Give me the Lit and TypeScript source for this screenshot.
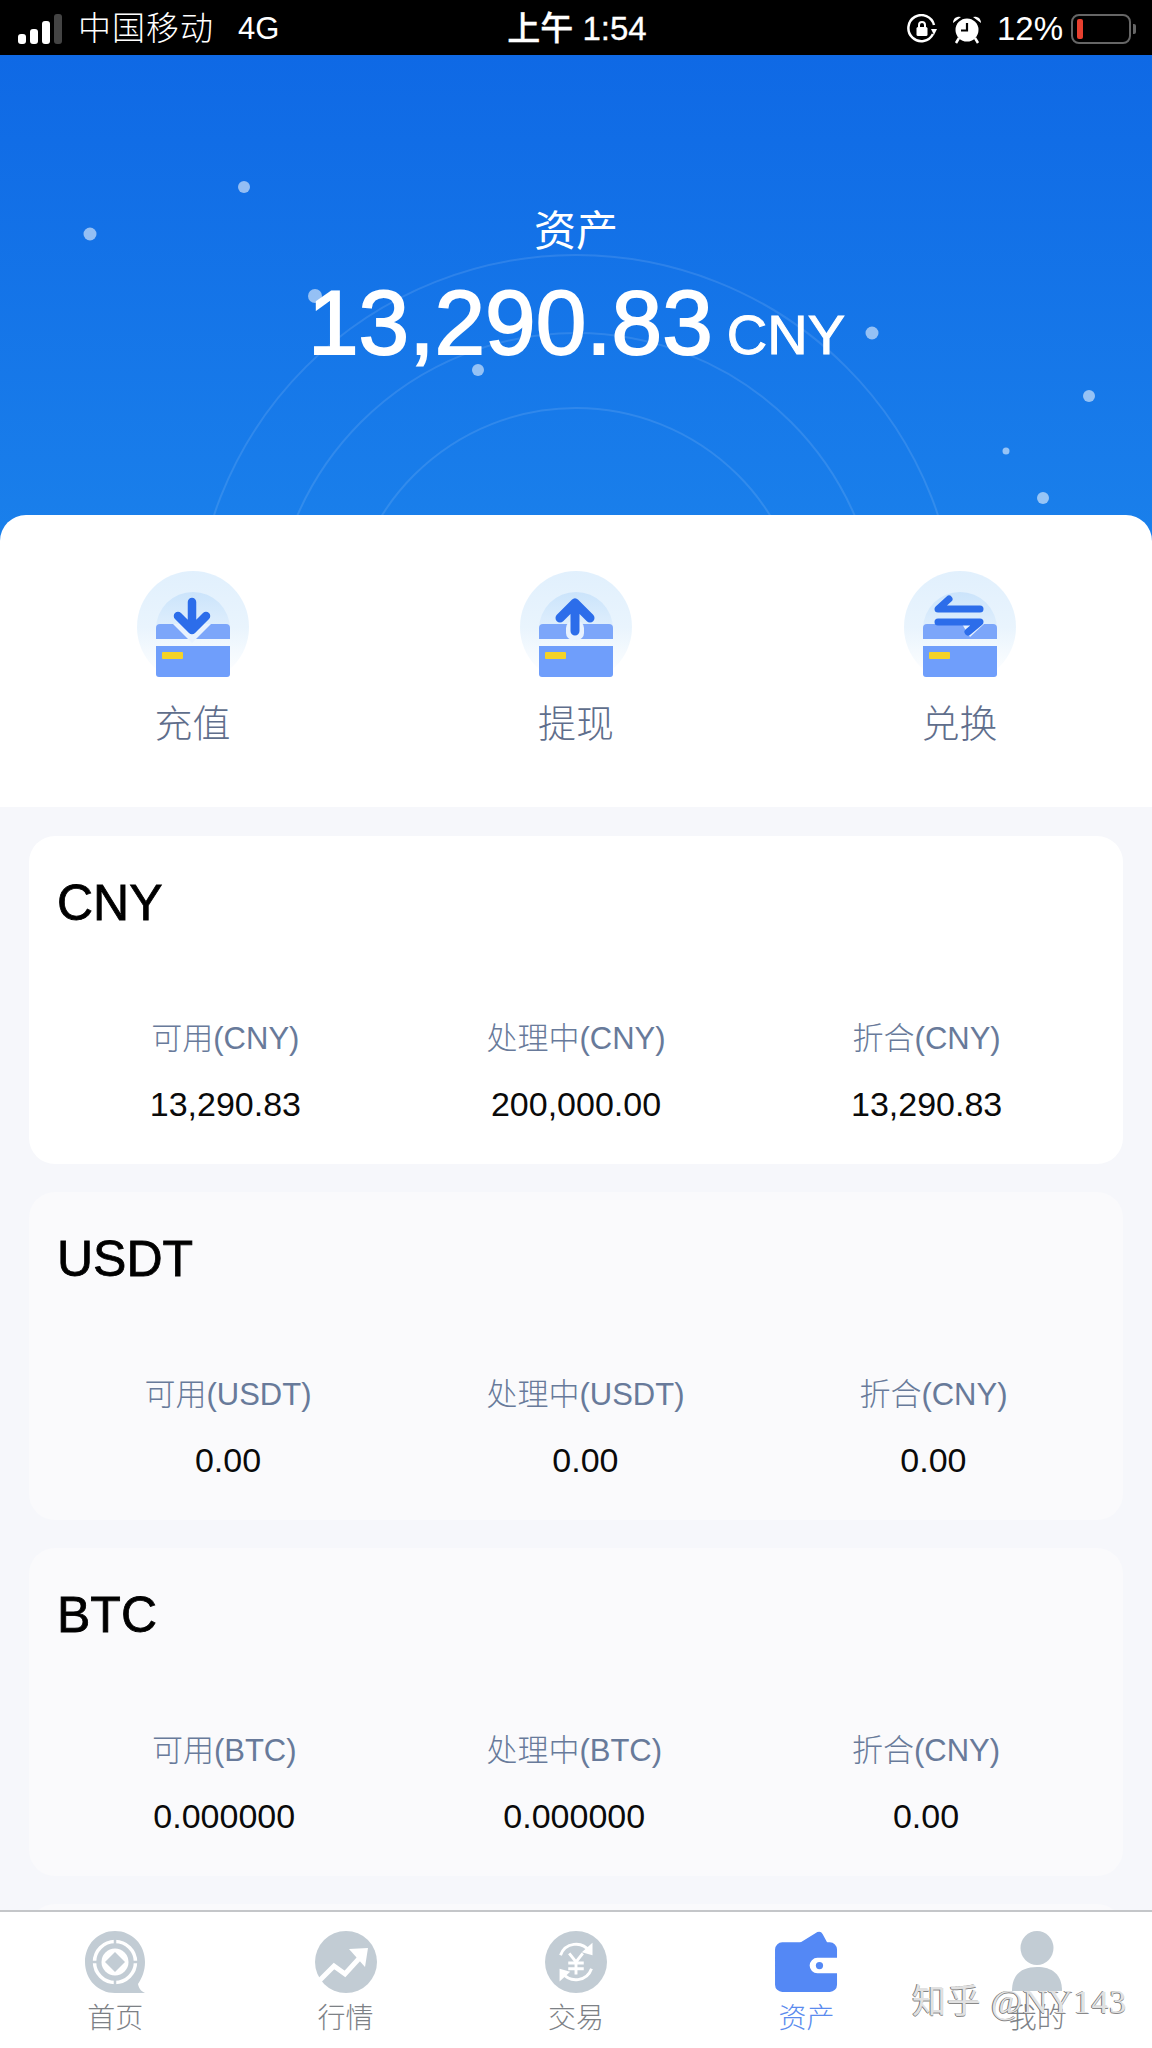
import { LitElement, html, css, svg } from "lit";
import { customElement } from "lit/decorators.js";

const assets = [
  { name: "CNY", rows: [["可用(CNY)", "13,290.83"], ["处理中(CNY)", "200,000.00"], ["折合(CNY)", "13,290.83"]], dim: false },
  { name: "USDT", rows: [["可用(USDT)", "0.00"], ["处理中(USDT)", "0.00"], ["折合(CNY)", "0.00"]], dim: true },
  { name: "BTC", rows: [["可用(BTC)", "0.000000"], ["处理中(BTC)", "0.000000"], ["折合(CNY)", "0.00"]], dim: true },
];

const dots = [[90,179,6.5],[244,132,6],[315,241,7],[478,315,6],[872,278,6.5],[1089,341,6],[1006,396,3.5],[1043,443,6]];

const actionBase = (id: string, glyph: unknown, notch: unknown) => svg`
  <defs>
    <linearGradient id="o${id}" x1="0" y1="0" x2="0" y2="1">
      <stop offset="0" stop-color="#e1f0fd"/><stop offset="0.5" stop-color="#e9f4fd"/><stop offset="0.95" stop-color="#ffffff"/>
    </linearGradient>
    <linearGradient id="i${id}" x1="0" y1="0" x2="0" y2="1">
      <stop offset="0" stop-color="#cbe4fb"/><stop offset="1" stop-color="#e4f1fd"/>
    </linearGradient>
  </defs>
  <circle cx="56" cy="56" r="56" fill="url(#o${id})"/>
  <path d="M19 58a37 37 0 0 1 74 0v6H19z" fill="url(#i${id})"/>
  <path d="M19 57a4 4 0 0 1 4-4h66a4 4 0 0 1 4 4v11H19z" fill="#7ca6fa"/>
  <path d="M19 75h74v28a3 3 0 0 1-3 3H22a3 3 0 0 1-3-3z" fill="#6f9efb"/>
  <rect x="25" y="81" width="21" height="7" rx="1" fill="#f4d327"/>
  ${notch}
  ${glyph}
`;

const downIcon = svg`<svg class="aicon" viewBox="0 0 112 112">${actionBase("d",
  svg`<path d="M55 31V58M41 45l14 14 14-14" fill="none" stroke="#2c6dea" stroke-width="8.500" stroke-linecap="round" stroke-linejoin="round"/>`,
  svg`<path d="M36 53l19 19 19-19z" fill="#e8f2fe"/>`)}</svg>`;
const upIcon = svg`<svg class="aicon" viewBox="0 0 112 112">${actionBase("u",
  svg`<path d="M55 60V32M40 47l15-15 15 15" fill="none" stroke="#2c6dea" stroke-width="9" stroke-linecap="round" stroke-linejoin="round"/>`,
  svg`<rect x="46" y="50" width="18" height="19" rx="7" fill="#e8f2fe"/>`)}</svg>`;
const swapIcon = svg`<svg class="aicon" viewBox="0 0 112 112">${actionBase("s",
  svg`<path d="M76 38H34l11-10" fill="none" stroke="#2c6dea" stroke-width="7" stroke-linecap="round" stroke-linejoin="round"/><path d="M34 51H76L64 61" fill="none" stroke="#2c6dea" stroke-width="7" stroke-linecap="round" stroke-linejoin="round"/>`,
  svg`<path d="M58 53l8 13 14-13z" fill="#e8f2fe"/>`)}</svg>`;

const GR = "#c2ccd4";
const homeIcon = svg`<svg class="tabicon" viewBox="0 0 60 62">
  <path d="M30 0C13 0 0 13.500 0 31s13 31 30 31h30c-2-1-6-3-7-9 4-6 7-13 7-22C60 13.500 47 0 30 0z" fill="${GR}"/>
  <circle cx="30" cy="31" r="20.500" fill="none" stroke="#fff" stroke-width="3.500"/>
  <path d="M30 8v6M30 48v6M7 31h6M47 31h6" stroke="${GR}" stroke-width="2.500"/>
  <circle cx="30" cy="31" r="13.500" fill="#fff"/>
  <path d="M30 21l10 10-10 10-10-10z" fill="${GR}"/>
</svg>`;
const marketIcon = svg`<svg class="tabicon" viewBox="0 0 62 62">
  <ellipse cx="31" cy="31" rx="31" ry="31" fill="${GR}"/>
  <path d="M4 50l15-15 11 8 20-22" fill="none" stroke="#fff" stroke-width="5"/>
  <path d="M34 18l19-1-3 19z" fill="#fff"/>
</svg>`;
const tradeIcon = svg`<svg class="tabicon" viewBox="0 0 64 64">
  <circle cx="32" cy="32" r="32" fill="${GR}"/>
  <path d="M46 21A17 17 0 0 0 16 25" fill="none" stroke="#fff" stroke-width="3"/>
  <path d="M18 43A17 17 0 0 0 48 39" fill="none" stroke="#fff" stroke-width="3"/>
  <path d="M49 12v13l-11-3z" fill="#fff"/>
  <path d="M15 52V39l11 3z" fill="#fff"/>
  <path d="M25 23l7 9 7-9M24 33h16M24 39h16M32 32v13" fill="none" stroke="#fff" stroke-width="3"/>
</svg>`;
const walletIcon = svg`<svg class="tabicon" viewBox="0 0 62 60">
  <path d="M24 12L42 1a4 4 0 0 1 5 2l5 9z" fill="#5488f5"/>
  <path d="M8 11h46a7 7 0 0 1 7 7v8H42a7.500 7.500 0 0 0 0 15h19v11a7 7 0 0 1-7 7H8a7 7 0 0 1-7-7V18a7 7 0 0 1 7-7z" fill="#5488f5"/>
  <circle cx="44" cy="33.500" r="3.500" fill="#5488f5"/>
</svg>`;
const userIcon = svg`<svg class="tabicon" viewBox="0 0 52 62">
  <ellipse cx="26" cy="17" rx="16.500" ry="17" fill="${GR}"/>
  <path d="M1 60c0-17 10-24 25-24s25 7 25 24z" fill="${GR}"/>
</svg>`;

const tabs = [
  { label: "首页", icon: homeIcon },
  { label: "行情", icon: marketIcon },
  { label: "交易", icon: tradeIcon },
  { label: "资产", icon: walletIcon, active: true },
  { label: "我的", icon: userIcon },
];

@customElement("app-root")
export class AppRoot extends LitElement {
  static styles = css`
    :host { display: block; width: 1152px; height: 2048px; overflow: hidden; background: #f6f7fb; font-family: "Liberation Sans", "Noto Sans CJK SC", sans-serif; }
    .page { display: flex; flex-direction: column; height: 2048px; }

    .status { flex: none; height: 55px; box-sizing: border-box; background: #000; color: #fff; display: grid; grid-template-columns: 1fr auto 1fr; align-items: center; padding: 2px 16px 0 18px; font-size: 32px; line-height: 1; }
    .st-left { display: flex; align-items: center; }
    .signal { display: flex; align-items: flex-end; gap: 4px; height: 30px; margin-right: 16px; }
    .signal i { display: block; width: 8px; border-radius: 3px; background: #fff; }
    .signal i.off { background: #444; }
    .carrier { font-size: 33px; letter-spacing: 1px; font-weight: 300; }
    .net { font-size: 31px; margin-left: 24px; }
    .time { font-size: 33px; font-weight: 500; -webkit-text-stroke: 0.300px #fff; }
    .st-right { display: flex; align-items: center; justify-content: flex-end; gap: 0; }
    .pct { font-size: 33px; margin: 0 8px 0 14px; }
    .battery { width: 60px; height: 30px; box-sizing: border-box; border: 2.500px solid #666; border-radius: 8px; padding: 3px 4px; display: flex; }
    .battery i { display: block; width: 6px; background: #e8402f; border-radius: 2px; }
    .nub { width: 3px; height: 10px; margin-left: 2px; background: #666; border-radius: 0 2px 2px 0; }

    .hero { flex: none; position: relative; height: 490px; background: linear-gradient(180deg, #0f69e5 0%, #1a80eb 100%); color: #fff; text-align: center; overflow: hidden; }
    .deco { position: absolute; left: 0; top: 0; width: 1152px; height: 490px; }
    .hero-text { position: relative; padding-top: 147px; }
    .hero-title { font-size: 42px; line-height: 60px; }
    .hero-amount { display: flex; justify-content: center; align-items: baseline; gap: 14px; line-height: 100px; margin-top: 11px; padding-left: 1px; }
    .hero-num { font-size: 91px; -webkit-text-stroke: 1.800px #fff; }
    .hero-unit { font-size: 56px; -webkit-text-stroke: 1px #fff; }

    .actions { flex: none; position: relative; margin-top: -30px; height: 292px; box-sizing: border-box; background: #fff; border-radius: 26px 26px 0 0; display: flex; justify-content: space-between; padding: 56px 120px 0; }
    .action { width: 145px; display: flex; flex-direction: column; align-items: center; }
    .aicon { width: 112px; height: 112px; display: block; }
    .action span { margin-top: 17px; font-size: 38px; line-height: 48px; font-weight: 300; color: #5f6e8c; }

    .list { flex: 1; min-height: 0; overflow: hidden; padding: 29px 29px 0 29px; display: flex; flex-direction: column; gap: 28px; }
    .card { flex: none; height: 328px; box-sizing: border-box; background: #fff; border-radius: 26px; padding: 39px 28px 0; }
    .card.dim { background: #fafafc; }
    .card h2 { margin: 0; font-size: 50px; font-weight: 400; line-height: 56px; color: #000; -webkit-text-stroke: 0.800px #000; }
    .row { display: flex; justify-content: space-around; margin-top: 86px; }
    .cell { text-align: center; }
    .cell .k { font-size: 31px; line-height: 44px; font-weight: 300; color: #687a9a; white-space: nowrap; }
    .cell .v { font-size: 34px; line-height: 44px; margin-top: 21px; color: #0a0a0a; white-space: nowrap; }

    .tabbar { flex: none; position: relative; height: 138px; box-sizing: border-box; background: #fff; border-top: 2px solid #c4c6c9; display: grid; grid-template-columns: repeat(5, 1fr); }
    .tab { display: flex; flex-direction: column; align-items: center; }
    .iconbox { height: 81px; display: flex; align-items: flex-end; justify-content: center; }
    .tabicon { display: block; height: 62px; width: auto; }
    .tab span { margin-top: 9px; font-size: 28px; line-height: 34px; font-weight: 300; color: #7d8186; }
    .tab.active span { color: #5b8bee; }
    .mark { position: absolute; left: 912px; top: 70px; font-size: 34px; line-height: 40px; font-family: "Liberation Serif", "Noto Sans CJK SC", serif; color: rgba(255,255,255,0.8); text-shadow: -1px 0 #777, 0 1px #888; white-space: nowrap; letter-spacing: 0.800px; }
  `;

  render() {
    return html`
      <div class="page">
        <div class="status">
          <div class="st-left">
            <div class="signal">
              <i style="height:10px"></i><i style="height:15px"></i><i style="height:23px"></i><i class="off" style="height:30px"></i>
            </div>
            <span class="carrier">中国移动</span><span class="net">4G</span>
          </div>
          <div class="time">上午 1:54</div>
          <div class="st-right">
            <svg width="30" height="30" viewBox="0 0 30 30">
              <path d="M26 20A13 13 0 1 1 27 11" fill="none" stroke="#fff" stroke-width="2.500"/>
              <path d="M24 15h6l-3 6z" fill="#fff"/>
              <rect x="9.500" y="13" width="11" height="9" rx="1.500" fill="#fff"/>
              <path d="M12 13v-2a3 3 0 0 1 6 0v2" fill="none" stroke="#fff" stroke-width="2"/>
            </svg>
            <svg width="32" height="32" viewBox="0 0 32 32" style="margin-left:14px">
              <circle cx="16" cy="17" r="11.500" fill="#fff"/>
              <path d="M16 10v7.500h-6" fill="none" stroke="#000" stroke-width="2.200"/>
              <path d="M2 10a6 6 0 0 1 8-6zM30 10a6 6 0 0 0-8-6z" fill="#fff"/>
              <path d="M8 25l-3 5M24 25l3 5" stroke="#fff" stroke-width="2.500"/>
            </svg>
            <span class="pct">12%</span>
            <div class="battery"><i></i></div><div class="nub"></div>
          </div>
        </div>

        <div class="hero">
          <svg class="deco" viewBox="0 0 1152 490">
            <g fill="none" stroke="#fff" stroke-opacity="0.11" stroke-width="2">
              <circle cx="576" cy="582" r="382"/>
              <circle cx="576" cy="582" r="304"/>
              <circle cx="576" cy="582" r="229"/>
            </g>
            ${dots.map(([x, y, r]) => svg`<circle cx=${x} cy=${y} r=${r} fill="#fff" fill-opacity="0.55"/>`)}
          </svg>
          <div class="hero-text">
            <div class="hero-title">资产</div>
            <div class="hero-amount"><span class="hero-num">13,290.83</span><span class="hero-unit">CNY</span></div>
          </div>
        </div>

        <div class="actions">
          <div class="action">${downIcon}<span>充值</span></div>
          <div class="action">${upIcon}<span>提现</span></div>
          <div class="action">${swapIcon}<span>兑换</span></div>
        </div>

        <div class="list">
          ${assets.map((a) => html`
            <section class="card ${a.dim ? "dim" : ""}">
              <h2>${a.name}</h2>
              <div class="row">
                ${a.rows.map((r) => html`<div class="cell"><div class="k">${r[0]}</div><div class="v">${r[1]}</div></div>`)}
              </div>
            </section>`)}
          <section class="card dim"></section>
        </div>

        <nav class="tabbar">
          ${tabs.map((t) => html`
            <div class="tab ${t.active ? "active" : ""}">
              <div class="iconbox">${t.icon}</div>
              <span>${t.label}</span>
            </div>`)}
          <div class="mark">知乎 @NY143</div>
        </nav>
      </div>
    `;
  }
}
